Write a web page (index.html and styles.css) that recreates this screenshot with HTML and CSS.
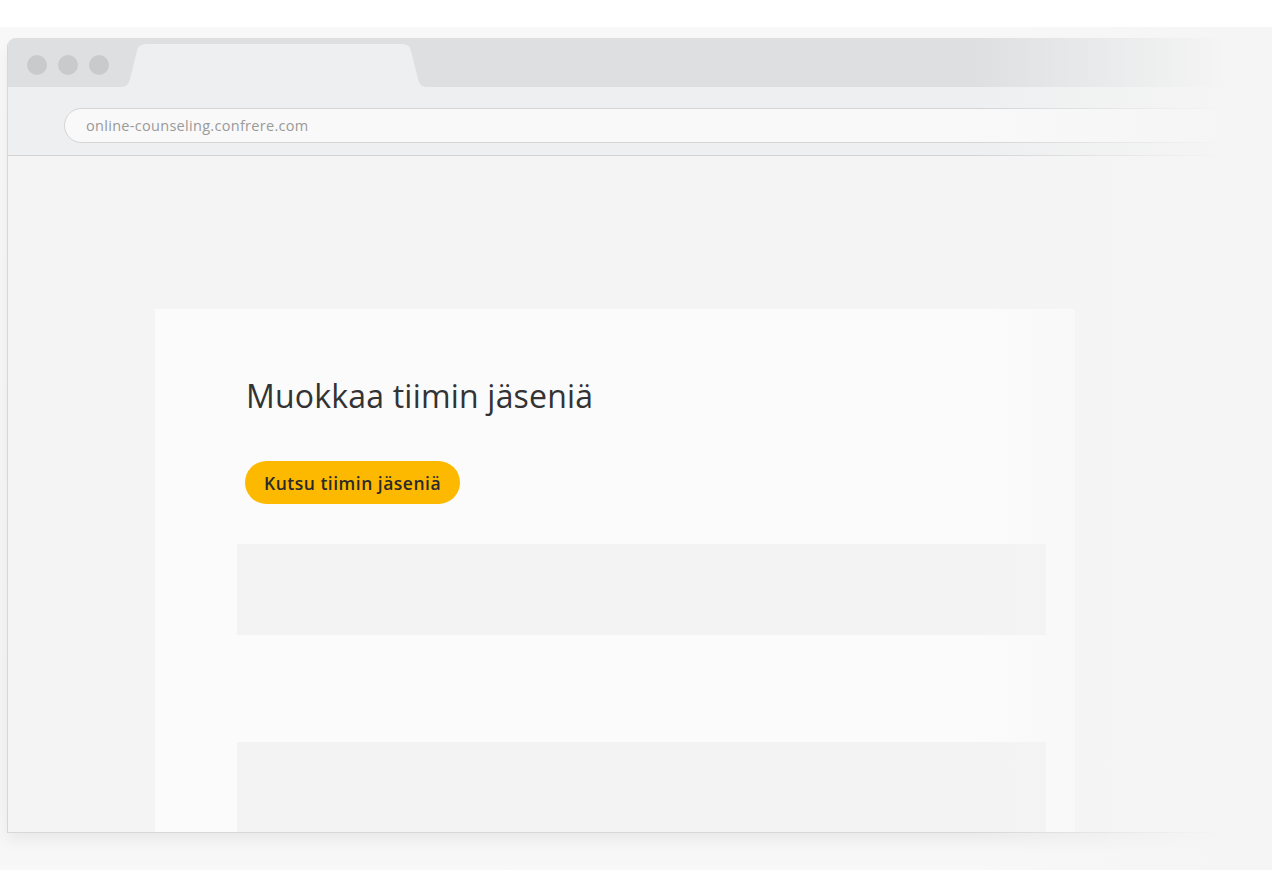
FILE: index.html
```html
<!DOCTYPE html>
<html lang="fi">
<head>
	<meta charset="UTF-8">
	<meta name="viewport" content="width=device-width, initial-scale=1.0">
	<title>Muokkaa tiimin jäseniä</title>
	<link rel="stylesheet" href="styles.css">
</head>
<body>
<div class="stage">
	<div class="browser">
		<!-- välilehtipalkki -->
		<div class="tab-bar">
			<div class="dots">
				<span class="dot"></span>
				<span class="dot"></span>
				<span class="dot"></span>
			</div>
			<svg class="tab" width="306" height="44" viewBox="0 0 306 44">
				<path d="M0 44 C6 44 8 40 9 36 L16 8 C17 3 20 1 26 1 L280 1 C286 1 289 3 290 8 L297 36 C298 40 300 44 306 44 Z" fill="#eeeff0"/>
			</svg>
		</div>

		<!-- osoiterivi -->
		<div class="toolbar">
			<div class="address">online-counseling.confrere.com</div>
		</div>

		<!-- sivun sisältö -->
		<div class="viewport">
			<div class="card">
				<h1 class="title">Muokkaa tiimin jäseniä</h1>
				<button class="invite-button">Kutsu tiimin jäseniä</button>
				<div class="placeholder"></div>
				<div class="placeholder placeholder-last"></div>
			</div>
		</div>
	</div>
	<div class="fade"></div>
</div>
</body>
</html>
```

FILE: styles.css
```css
body {
	margin: 0;
	background-color: #fff;
	font-family: "Open Sans", Lato, sans-serif;
}
.stage {
	position: relative;
	margin-top: 27px;
	width: 1272px;
	height: 843px;
	padding: 11px 0 0 7px;
	box-sizing: border-box;
	background: linear-gradient(#f8f8f8, #f4f4f4 90%, #f8f8f8);
	overflow: hidden;
}
.browser {
	width: 1300px;
	height: 794px;
	border: 1px solid #d6d7d8;
	border-top: none;
	border-radius: 9px 0 0 0;
	overflow: hidden;
	box-shadow: 0 8px 14px rgba(0, 0, 0, 0.05);
	background-color: #f4f4f4;
}
.tab-bar {
	height: 49px;
	background-color: #dddfe1;
	display: flex;
	align-items: flex-end;
}
.dots {
	display: flex;
	gap: 11px;
	padding: 0 0 12px 19px;
	align-self: flex-end;
}
.dot {
	width: 20px;
	height: 20px;
	border-radius: 50%;
	background-color: #c9cacc;
}
.tab {
	display: block;
	margin-left: 12px;
}
.toolbar {
	height: 69px;
	background-color: #eeeff0;
	border-bottom: 1px solid #d3d4d6;
	padding: 21px 0 0 56px;
	box-sizing: border-box;
}
.address {
	height: 35px;
	width: 1200px;
	border: 1px solid #d3d4d6;
	border-radius: 18px;
	background-color: #f9f9f9;
	box-sizing: border-box;
	padding-left: 21px;
	line-height: 33px;
	font-size: 14.5px;
	letter-spacing: 0.3px;
	color: #9a9a9a;
}
.viewport {
	padding: 153px 0 0 147px;
}
.card {
	width: 920px;
	height: 540px;
	background-color: #fbfbfb;
	padding: 65px 29px 0 82px;
	box-sizing: border-box;
}
.title {
	margin: 0 0 44px 9px;
	font-weight: 400;
	font-size: 32px;
	line-height: 43px;
	letter-spacing: 0.2px;
	color: #333;
}
.invite-button {
	display: block;
	margin: 0 0 40px 8px;
	height: 43px;
	padding: 0 19px;
	border: none;
	border-radius: 22px;
	background-color: #fdb900;
	font-family: "Open Sans", sans-serif;
	font-size: 17.5px;
	font-weight: 600;
	letter-spacing: 0.5px;
	color: #2a2a2a;
	cursor: pointer;
}
.placeholder {
	height: 91px;
	background-color: #f3f3f3;
	margin-bottom: 107px;
}
.fade {
	position: absolute;
	top: 0;
	right: 0;
	width: 300px;
	height: 100%;
	background: linear-gradient(to right, rgba(245, 245, 245, 0), #f5f5f5 85%);
}
```
